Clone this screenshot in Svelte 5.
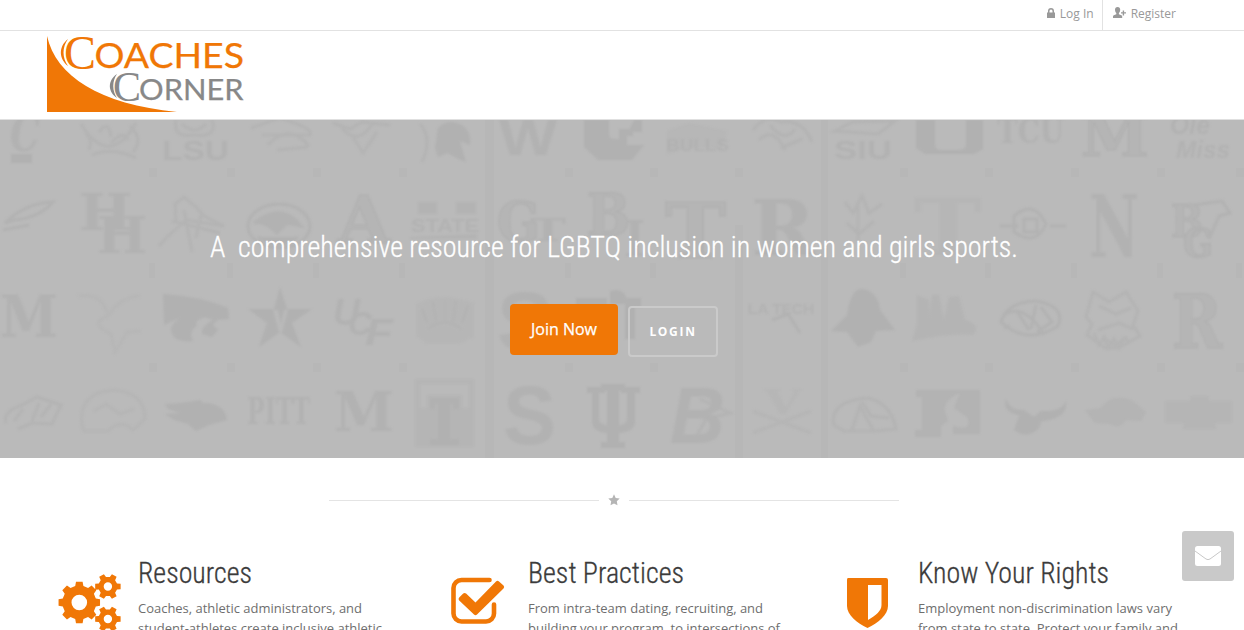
<script>
  const gear = (cx, cy, r, inner, hole, n) => {
    const step = (Math.PI * 2) / n;
    const pts = [];
    for (let i = 0; i < n; i++) {
      const a = i * step;
      for (const [off, rad] of [[-0.31, inner], [-0.2, r], [0.2, r], [0.31, inner]]) {
        pts.push(`${(cx + rad * Math.cos(a + off * step)).toFixed(2)} ${(cy + rad * Math.sin(a + off * step)).toFixed(2)}`);
      }
    }
    return `M${pts.join('L')}ZM${cx - hole} ${cy}a${hole} ${hole} 0 1 0 ${hole * 2} 0a${hole} ${hole} 0 1 0 ${-hole * 2} 0Z`;
  };
  const gears = [gear(20.3, 28.5, 21, 17, 7.8, 8), gear(48.9, 12.5, 13, 9.6, 4.2, 6), gear(48.9, 45, 13, 9.6, 4.2, 6)].join('');

  // [text, x, baseline, size, width, kind]
  const marks = [
    ['C', 10, 151, 50, 30, 'si'], ['LSU', 162, 160, 27, 67, 'b'], ['W', 499, 155, 50, 58, 'b'],
    ['BULLS', 666, 151, 16, 63, 'b'], ['SIU', 834, 159, 26, 58, 'b'],
    ['TCU', 997, 143, 34, 67, 's'], ['M', 1081, 156, 56, 68, 'so'],
    ['Ole', 1170, 134, 26, 40, 'bi'], ['Miss', 1176, 158, 24, 54, 'bi'],
    ['H', 79, 230, 50, 53, 's'], ['H', 97, 253, 50, 50, 's'], ['A', 338, 243, 65, 52, 'so'],
    ['STATE', 411, 232, 19, 68, 'b'], ['G', 497, 241, 54, 43, 'so'], ['T', 530, 241, 32, 36, 's'],
    ['B', 587, 235, 57, 43, 'so'], ['I', 624, 256, 48, 21, 's'], ['T', 665, 258, 76, 61, 'so'], ['R', 751, 255, 76, 64, 's'],
    ['T', 914, 255, 78, 68, 'sf'], ['N', 1089, 257, 86, 50, 's'], ['B', 1171, 237, 45, 32, 'so'], ['G', 1183, 257, 39, 30, 'so'],
    ['M', 0, 337, 57, 58, 's'], ['U', 333, 325, 36, 27, 'bi'], ['C', 348, 335, 34, 24, 'bi'], ['F', 365, 345, 36, 28, 'bi'],
    ['S', 497, 350, 84, 56, 'b'], ['LA TECH', 748, 314, 14, 66, 'b'],
    ['R', 1172, 348, 75, 50, 'so'],
    ['PITT', 247, 424, 38, 63, 's'], ['M', 334, 431, 54, 60, 's'],
    ['S', 503, 444, 84, 53, 'b'],
    ['B', 670, 443, 79, 55, 'bi'], ['V', 764, 414, 34, 37, 'sf']
  ];
  const nubs = [149, 227, 313, 399, 565, 650, 735, 900, 985, 1071, 1157, 1236];
  const topics = [
    { icon: 'gears', title: 'Resources', w: 114, lines: ['Coaches, athletic administrators, and', 'student-athletes create inclusive athletic'], lw: [224, 244] },
    { icon: 'check', title: 'Best Practices', w: 156, lines: ['From intra-team dating, recruiting, and', 'building your program, to intersections of'], lw: [235, 252] },
    { icon: 'shield', title: 'Know Your Rights', w: 191, lines: ['Employment non-discrimination laws vary', 'from state to state. Protect your family and'], lw: [254, 260] }
  ];
</script>

<div class="page">
  <nav class="topbar">
    <a class="login" href="#login">
      <svg width="8" height="10" viewBox="0 0 8 10"><path fill="#999" fill-rule="evenodd" d="M0 4.5h1V3a3 3 0 0 1 6 0v1.5h1V10H0ZM2.500 4.500h3V3a1.500 1.500 0 0 0-3 0Z" /></svg>
      <span>Log In</span>
    </a>
    <a class="register" href="#register">
      <svg width="13" height="12" viewBox="0 0 13 12"><path fill="#999" d="M4.600 0C6.400 0 7.200 1.100 7.200 2.800C7.200 4.300 6.600 5.400 5.900 6v1.200l2.500 1q.8.4.8 1.300V11H0V9.500q0-.9.8-1.300l2.500-1V6C2.600 5.400 2 4.300 2 2.800C2 1.100 2.800 0 4.600 0ZM9.700 3.500h1.400v1.700H13v1.400h-1.900v1.800H9.700V6.600H8V5.200h1.700Z" /></svg>
      <span>Register</span>
    </a>
  </nav>

  <header>
    <svg class="logo" width="198" height="76" viewBox="0 0 198 76">
      <path fill="#f07706" d="M0 0C9 40 52 68 130 76H0Z" />
      <g fill="#f07706">
        <text class="flare" x="17" y="32.500" font-size="48" textLength="32" lengthAdjust="spacingAndGlyphs">C</text>
        <text class="caps" stroke="#f07706" x="47.500" y="32" font-size="34" textLength="149.500" lengthAdjust="spacingAndGlyphs">OACHES</text>
        <path d="M21 3C11 11 12 23 21 30C15 22 15 11 21 3Z" />
      </g>
      <g fill="#888">
        <text class="flare" x="66" y="64.500" font-size="42" textLength="28" lengthAdjust="spacingAndGlyphs">C</text>
        <text class="caps" stroke="#888" x="92" y="63.500" font-size="29" textLength="104.500" lengthAdjust="spacingAndGlyphs">ORNER</text>
        <path d="M70 38C60 45 61 56 70 62C65 55 65 45 70 38Z" />
      </g>
    </svg>
  </header>

  <section class="hero">
    <svg class="wall" width="1244" height="338" viewBox="0 120 1244 338" aria-hidden="true">
      <g class="band"><path d="M485 120h9v338h-9ZM735 225h8v233h-8ZM821 120h7v338h-7Z" />
        {#each nubs as x}<path d="M{x} 168h8v9h-8ZM{x} 263h6v15h-6ZM{x} 363h8v9h-8Z" />{/each}
      </g>
      <g class="soft">
        {#each marks as [t, x, y, size, w, kind]}
          <text class={kind} {x} {y} font-size={size} textLength={w} lengthAdjust="spacingAndGlyphs">{t}</text>
        {/each}
        <g class="fill">
          <path d="M11 154h21v9H11ZM916 120h19v24q0 6 6 6h17q8 0 8-6v-24h17v29l-9 5h-49l-9-6Z" />
          <path d="M435 148L438 128Q448 118 462 125Q472 132 470 145L460 141L466 162Q453 157 448 153L438 157Z" />
          <path d="M584 120h25v14q0 5 6 5h4v-10h14v7h-6v9h17l-12 15h-34l-14-13ZM634 120h8v12h-14Z" />
          <path d="M667 131l22-8l38 8l-5 19q-27-8-55 5Z" opacity=".3" />
          <path d="M163 294q37 2 65 14l1 11l-16 1q-17-7-36-1l-13 6ZM171 328q5-13 28-15l15 2q-22 4-17 11q-9 5-4 15q-22 2-22-13ZM202 330q6-10 16-11l-5 6l5 5l-6 7l-10-3Z" />
          <path fill-rule="evenodd" d="M280 287l7 22h25l-20 14l9 24l-21-15l-21 15l8-24l-19-14h26ZM273 310h5l3 14l3-14h4l-6 22h-3Z" />
          <path d="M416 304q25-13 58-1v34l-16 7h-31l-11-8Z" opacity=".4" />
          <path d="M576 298h65v9h-6v32h-10v-41h-18v40h-9v-31h-22ZM610 291q17-4 17 13h-17Z" />
          <path d="M831 331l16-16q4-27 15-26q16 2 18 21l15 20l-19 1l-5 11l-13 5l-11-15Z" />
          <path d="M912 341l5-18v-28l12 5v17l3-22h7l5 24l5-22l10-1l6 24q17 5 8 15q-24-2-61 6Z" opacity=".6" />
          <path d="M165 404q20-1 35-4l3 3q22 0 24 17l-18 5l-13 6l-8-7l-14-4l-9-6l15-1l-12-4Z" />
          <path d="M415 379h59v68h-59ZM420 384v24h7v-13h35v13h7v-24Z" fill-rule="evenodd" opacity=".55" />
          <path d="M430 398h29v11h-6v-5h-3v35h9v6h-29v-6h8v-35h-3v5h-5Z" />
          <path d="M587 387h18v6h-6v25q0 7 8 7v-34h-6v-7h24v7h-6v34q8 0 8-7v-25h-6v-6h19v6h-5v28q0 11-16 12v9h6v6h-24v-6h6v-9q-15-1-15-12v-28h-5Z" />
          <path d="M916 390h64v44h-27v-8q20 6 14-9l-13-9l6-15q-17 7-15 19l3 9l-7 5v11h-26v-7h7v-33h-6Z" opacity=".85" />
          <path d="M1006 399q-4 14 16 17l11 7l16-3q19-4 17-19q-4 11-25 10l-7 6l-10-7q-14 1-18-11ZM1019 416l-5 14q13 10 25-2l4-12Z" />
          <path d="M1085 410l16-2q11-16 32-7l13 11l-5 9l-15-1q-6 10-16 4l-15-1Z" opacity=".65" />
          <path d="M1165 401h67v22h-67ZM1191 396h17l8 33h-33Z" opacity=".55" />
          <path d="M418 202h19v12h-19ZM456 202h20v12h-20ZM410 237l67-3v5H410Z" opacity=".7" />
        </g>
        <g class="line">
          <path class="faint" d="M420 124q13 14 2 38M81 124q28 45 55-1M92 155q20-9 44 3M99 132q10-13 12 5M111 143q13-14 17-3M86 133q7 8 3 17M130 126q14 13 3 26M176 120q-4 18 18 15q24 3 18-15M182 124q13 12 24 0M251 128l28-10q35 10 31 17l-48 0M268 145q21-23 41 1M277 150l31-3M333 123l17 6l12-7l28 3M342 128q16 19 31-5M353 137l10 16l14-21M753 130q13-17 28-8q22-3 31 20M759 140q15-14 26 10M770 125q15 19 25 4M781 148l21-9M835 131l17-9l43-1l-17 13Z" />
          <path d="M5 223q20-20 48-21q-14 16-39 18ZM3 230l26-5" /><path class="faint" d="M176 221l-1-17l9-7l12 10l8 9l20 10l-38-6l-19 17l-8 9M184 210l8 42M172 221l48 12M201 215l-5 23" />
          <ellipse cx="279" cy="226" rx="31" ry="22" /><path fill="#b2b2b2" d="M254 223q28-22 47 3l-14-3l-10 10q-13-13-23-10ZM258 237q20 15 40 0" />
          <path d="M1000 226h18M1050 226h16M1014 216q20-17 32 8q-10 23-32 8ZM1024 219h13v13h-13ZM1194 205l28-4l8 12l-11 3l-10 23" />
          <path class="faint" d="M845 202l8 11l9-17l7 17l13-9M858 203v39M847 223l12 11l15-13" />
          <path opacity=".4" d="M78 296q25-4 30 20q12-19 32-20M106 317q-17 6 5 17l4 18l12-20l14-1" />
          <path class="faint" d="M422 308l5 15M433 302l3 19M445 300v20M456 301l-3 20M468 305l-6 18M428 329q18-14 34 1" />
          <path d="M772 320l16-6l12 19M1001 322q6-20 35-21q30 5 22 25q-31 20-57-4ZM1003 315q22-13 41 20M1016 310l13 20M1036 305l-5 24M1010 326l-6 2M1041 307l11 15l-15 10" />
          <path class="faint" d="M1093 292l16 10l17-10l12 19l-5 14l7 11l-22 12h-13l-18-13l5-11l-6-7ZM1099 306l17 8l15-6M1098 330l21-7l14 6M1105 339l10 6l12-8M1094 333l5 12l5-8l4 11l6-9l5 9l5-10l6 4M6 423q-4-11 16-18l15-8l24 8l-9 19l-20-1l-14 6M23 409l-9 12M39 403l-7 18M51 404l-10 13" />
          <path opacity=".5" d="M82 425q-4-32 31-35q32 2 32 29l-12 11q-12-12-25 1H84ZM94 411l12-7l14 10l14-5M753 411l58 22M811 411l-58 22" />
          <path class="faint" d="M834 425q-5-24 34-27q23 5 28 31l-21 2h-31ZM852 430l8-24l13 24M862 402l9 14l18 2M700 399l30 14l-24 6l-11 20" />
        </g>
      </g>
    </svg>
    <div class="pitch">
      <svg class="headline" width="808" height="40" viewBox="0 0 808 40"><text class="condensed" stroke="#fff" xml:space="preserve" x="0" y="28" font-size="29" fill="#fff" textLength="808" lengthAdjust="spacingAndGlyphs">A&nbsp; comprehensive resource for LGBTQ inclusion in women and girls sports.</text></svg>
      <div class="actions">
        <button class="join">Join Now</button>
        <button class="enter">LOGIN</button>
      </div>
    </div>
  </section>

  <div class="divider"><i></i><svg width="12" height="12" viewBox="0 0 12 12"><path fill="#b5b5b5" d="M6 .3l1.700 3.700l4 .5l-2.900 2.800l.7 4L6 9.400l-3.500 1.900l.7-4L.3 4.500l4-.5Z" /></svg><i></i></div>

  <main>
    {#each topics as topic}
      <article>
        <div class="icon">
          {#if topic.icon === 'gears'}
            <svg width="64" height="60" viewBox="0 0 64 60"><path fill-rule="evenodd" d={gears} /></svg>
          {:else if topic.icon === 'check'}
            <svg width="64" height="60" viewBox="0 0 64 60"><path d="M40.500 6H12.500a8 8 0 0 0-8 8v25.500a8 8 0 0 0 8 8h24.500a8 8 0 0 0 8-8v-9" fill="none" stroke="#f07706" stroke-width="4.600" stroke-linecap="round" /><path d="M10.200 23.500l4-4q1.400-1 2.900 0L26.500 28.500L47 7.400q1.500-1.400 3 0l4.500 4.100q1.400 1.500 0 3L28 40.500q-1.500 1.300-3 0L10.200 26.500q-1.400-1.500 0-3Z" /></svg>
          {:else}
            <svg width="64" height="60" viewBox="0 0 64 60"><path fill-rule="evenodd" d="M9 4h38q2 0 2 2v26c0 9-10 17-20.500 22C18 49 8 41 8 32V6q0-2 1-2ZM29 11v35c8-5 13.500-9 13.500-15V11Z" /></svg>
          {/if}
        </div>
        <div class="copy">
          <h2><svg width={topic.w} height="40" viewBox="0 0 {topic.w} 40"><text class="condensed" stroke="#3b3b3b" x="0" y="30" font-size="29" fill="#3b3b3b" textLength={topic.w} lengthAdjust="spacingAndGlyphs">{topic.title}</text></svg></h2>
          {#each topic.lines as line, i}
            <svg class="line-text" width="280" height="20"><text x="0" y="14" textLength={topic.lw[i]} lengthAdjust="spacingAndGlyphs">{line}</text></svg>
          {/each}
        </div>
      </article>
    {/each}
  </main>

  <button class="mail" aria-label="Contact">
    <svg width="26" height="20" viewBox="0 0 26 20"><rect width="26" height="20" rx="2.500" fill="#fff" /><path d="M0 5L11 13q2 1.300 4 0L26 5" fill="none" stroke="#c8c8c8" stroke-width="1" /></svg>
  </button>
</div>

<style>
  :global(body) { margin: 0; overflow: hidden; }
  .page { width: 1244px; height: 630px; overflow: hidden; background: #fff; font-family: "Open Sans", sans-serif; }
  svg { display: block; flex: none; }
  .topbar { box-sizing: border-box; height: 31px; border-bottom: 1px solid #e2e2e2; display: flex; justify-content: flex-end; padding-right: 68px; }
  .topbar a { display: flex; height: 30px; box-sizing: border-box; padding-bottom: 3px; align-items: center; gap: 4.500px; color: #999; font-size: 12px; text-decoration: none; }
  .login { padding-right: 8px; border-right: 1px solid #e2e2e2; }
  .login svg { margin-top: -2px; }
  .register { padding-left: 10.500px; }
  .register svg { margin-top: -1px; }
  header { height: 88px; border-bottom: 1px solid #e0e0e0; }
  .logo { padding: 5px 0 0 47px; overflow: visible; }
  .flare { font-family: "Liberation Serif", serif; }
  .caps { font-family: Lato, sans-serif; stroke-width: .25; }
  .hero { position: relative; height: 338px; background: #bababa; overflow: hidden; }
  .wall { position: absolute; inset: 0; }
  .band { fill: #b7b7b7; }
  .soft { filter: blur(1px); }
  .soft text { fill: #b2b2b2; font-family: "DejaVu Serif", serif; font-weight: 700; }
  .soft .b, .soft .bi { font-family: "Liberation Sans", sans-serif; }
  .soft .bi, .soft .si { font-style: italic; }
  .soft .so { fill: #b5b5b5; stroke: #afafaf; stroke-width: 1.200; }
  .soft .sf { fill: #b6b6b6; }
  .fill { fill: #b1b1b1; }
  .line { fill: none; stroke: #b2b2b2; stroke-width: 3; }
  .faint { opacity: .75; }
  .pitch { position: relative; width: 1228px; display: flex; flex-direction: column; align-items: center; padding-top: 109px; }
  .condensed { font-family: "Roboto Condensed", Roboto, sans-serif; font-weight: 300; stroke-width: .3; }
  .headline { overflow: visible; }
  .actions { display: flex; gap: 10px; padding-top: 35px; }
  button { font-family: "Open Sans", sans-serif; padding: 0; color: #fff; box-sizing: border-box; }
  .join { width: 108px; height: 51px; border: 0; border-radius: 4px; background: #f07706; font-size: 16px; font-weight: 500; -webkit-text-stroke: .25px #fff; padding-bottom: 2px; }
  .enter { width: 90px; height: 51px; margin-top: 2px; border: 2px solid #cacaca; border-radius: 4px; background: transparent; font-size: 12px; font-weight: 700; letter-spacing: 1.700px; }
  .divider { width: 1228px; height: 84px; display: flex; align-items: center; justify-content: center; gap: 9px; }
  .divider i { width: 270px; height: 1px; background: #e4e4e4; }
  main { width: 1170px; margin-left: 29px; display: grid; grid-template-columns: repeat(3, 390px); padding-top: 11px; }
  article { display: flex; padding-left: 29px; }
  .icon { width: 80px; padding-top: 21px; fill: #f07706; }
  .icon svg { overflow: visible; margin-left: .5px; }
  h2 { margin: 0 0 6px; }
  .line-text { fill: #6e6e6e; font-size: 13px; overflow: visible; }
  .mail { position: fixed; left: 1182px; top: 531px; width: 52px; height: 50px; border: 0; border-radius: 3px; background: #c9c9c9; display: grid; place-items: center; }
</style>
